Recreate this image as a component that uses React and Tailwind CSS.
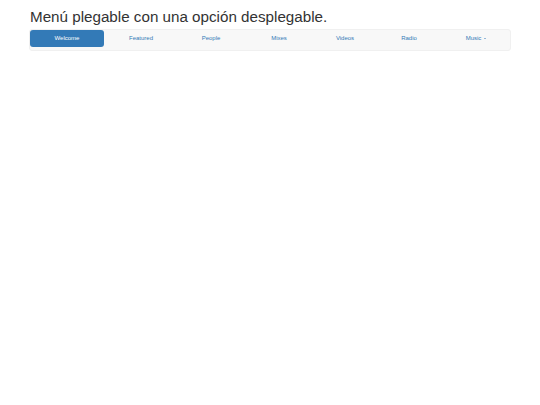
import React from 'react';

const items = [
  { label: 'Welcome', w: 'w-[74px]', active: true },
  { label: 'Featured', w: 'w-[74px]' },
  { label: 'People', w: 'w-[66px]' },
  { label: 'Mixes', w: 'w-[70px]' },
  { label: 'Videos', w: 'w-[62px]' },
  { label: 'Radio', w: 'w-[66px]' },
  { label: 'Music', w: 'w-[68px]', caret: true },
];

export default function App() {
  return (
    <div className="w-[540px] h-[405px] bg-white px-[30px] font-['Liberation_Sans',Arial,sans-serif]">
      <h1 className="pt-[7px] text-[15.2px] leading-[20px] text-[#333]">
        Menú plegable con una opción desplegable.
      </h1>
      <nav className="mt-[2px] -mx-px w-[482px] h-[22px] rounded-[3px] border border-[#f0f0f0] bg-[#f8f8f8] pb-[3px]">
        <ul className="flex h-[17px]">
          {items.map((it) => (
            <li key={it.label} className={it.w}>
              <a
                href="#"
                className={
                  'flex h-[17px] items-center justify-center rounded-[3px] text-[6px] ' +
                  (it.active ? 'bg-[#337ab7] text-white' : 'text-[#337ab7]')
                }
              >
                {it.label}
                {it.caret && (
                  <span className="ml-[3px] inline-block border-x-[1.5px] border-t-[1.5px] border-x-transparent border-t-[#337ab7]" />
                )}
              </a>
            </li>
          ))}
        </ul>
      </nav>
    </div>
  );
}
